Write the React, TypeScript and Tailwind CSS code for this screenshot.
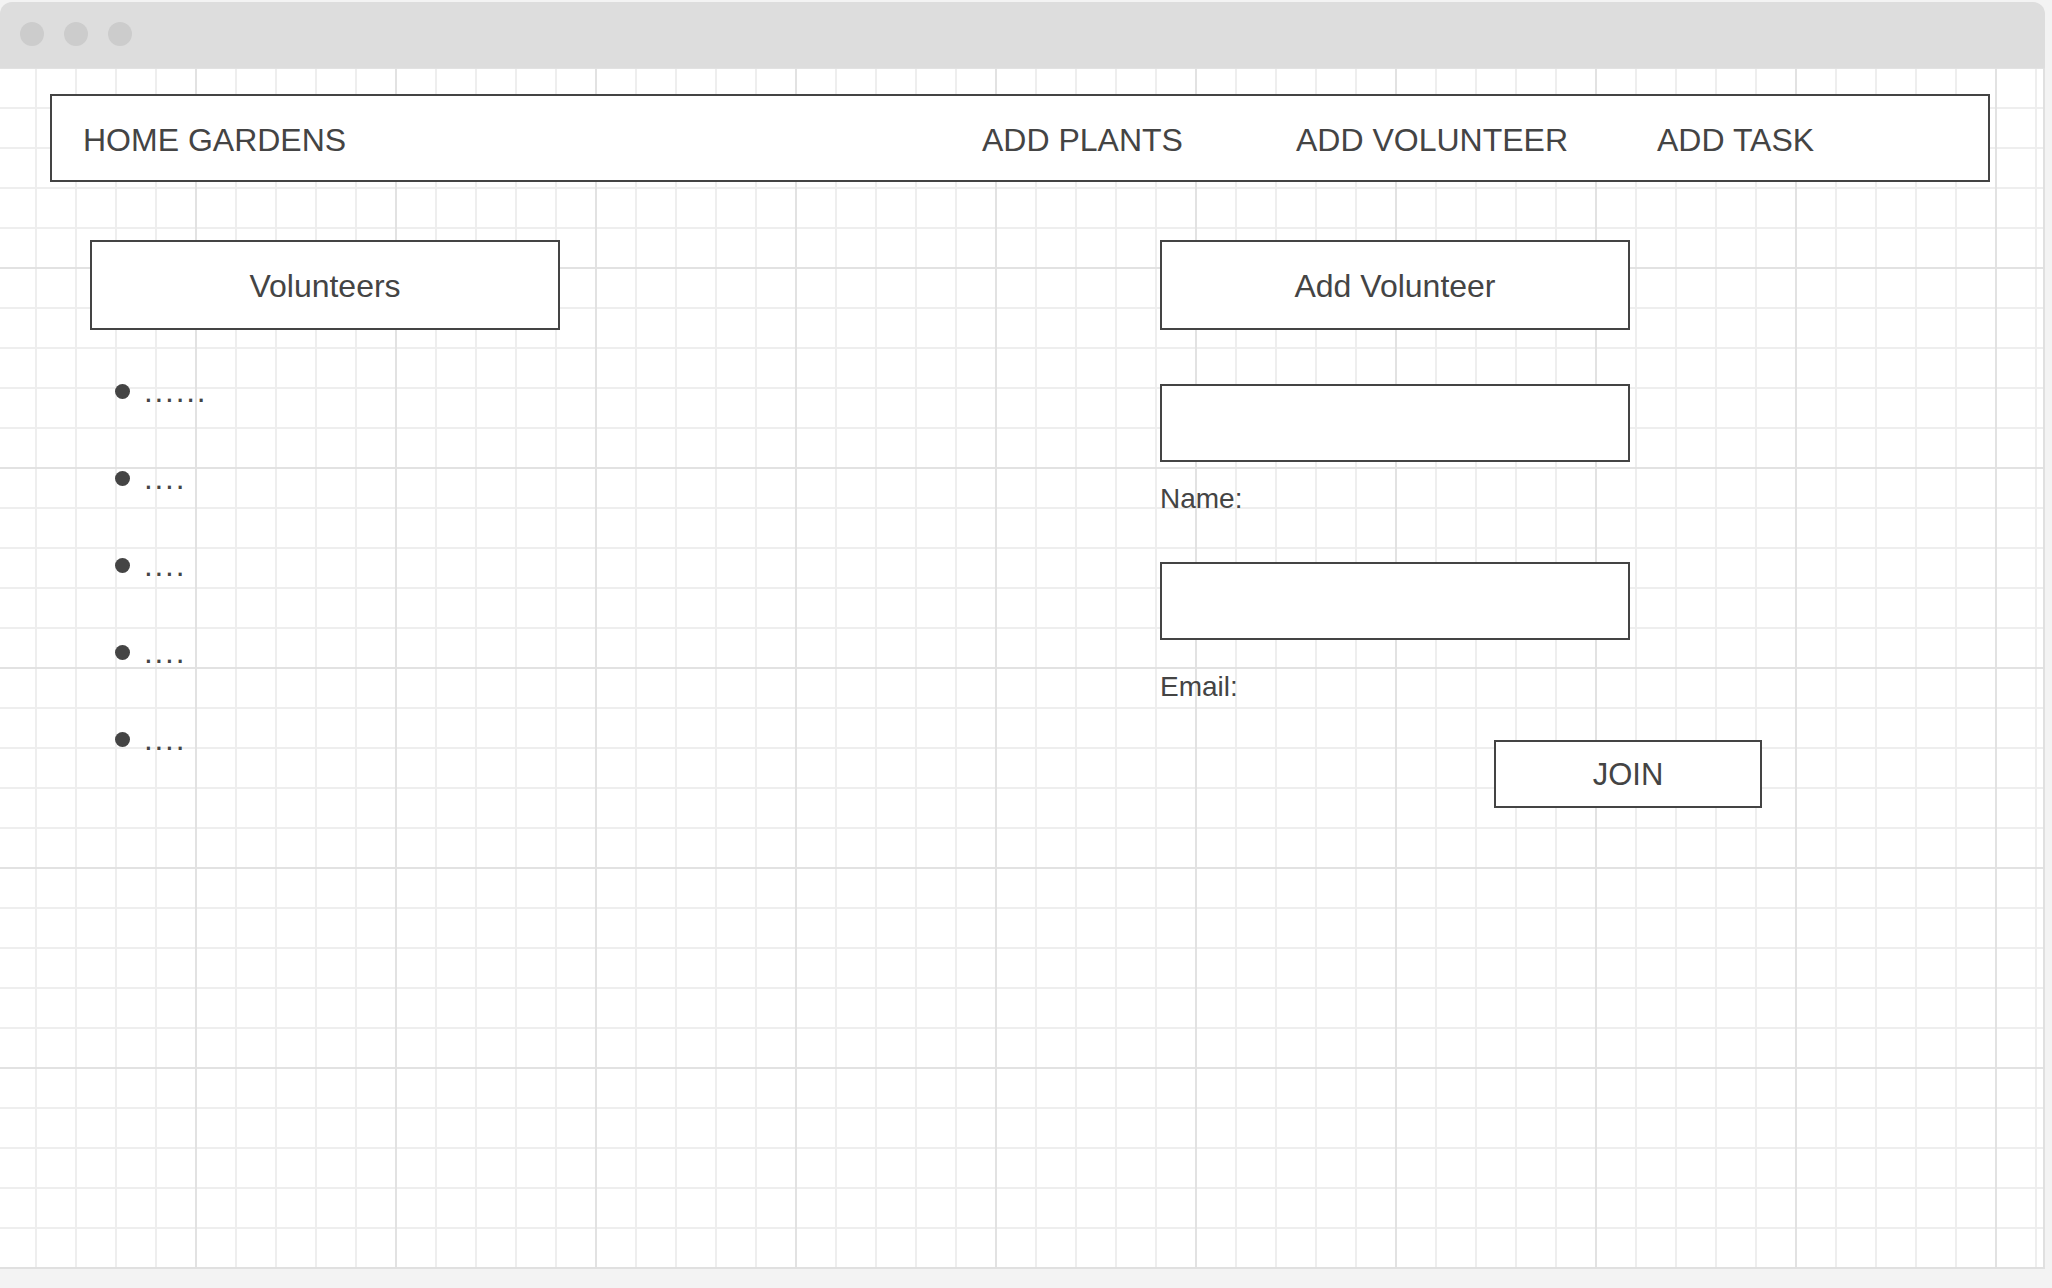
const navItems = [
  { label: "HOME GARDENS", width: "w-[899px]" },
  { label: "ADD PLANTS", width: "w-[314px]" },
  { label: "ADD VOLUNTEER", width: "w-[361px]" },
  { label: "ADD TASK", width: "" },
];

const volunteers = ["......", "....", "....", "....", "...."];

const Box = ({ children, className = "" }: { children?: React.ReactNode; className?: string }) => (
  <div className={`border-2 border-[#444444] bg-white flex items-center justify-center pt-[2px] ${className}`}>
    {children}
  </div>
);

const App = () => {
  return (
    <div className="min-h-screen bg-[#f3f3f3] pt-[2px] font-['Liberation_Sans',Arial,sans-serif] text-[#444444]">
      <div className="w-[2045px]">
        {/* window bar */}
        <div className="h-[66px] bg-[#dddddd] rounded-t-[12px] flex items-start pt-[20px] pl-[20px] gap-[20px]">
          <div className="w-[24px] h-[24px] rounded-full bg-[#cccccc]" />
          <div className="w-[24px] h-[24px] rounded-full bg-[#cccccc]" />
          <div className="w-[24px] h-[24px] rounded-full bg-[#cccccc]" />
        </div>

        {/* canvas */}
        <div className="h-[1201px] border-r-2 border-b-2 border-[#e0e0e0] bg-white bg-[linear-gradient(to_right,#e2e2e2_2px,transparent_2px),linear-gradient(to_bottom,#e2e2e2_2px,transparent_2px),linear-gradient(to_right,#eeeeee_2px,transparent_2px),linear-gradient(to_bottom,#eeeeee_2px,transparent_2px)] [background-size:200px_200px,200px_200px,40px_40px,40px_40px] [background-position:195px_-1px,195px_-1px,35px_-1px,35px_-1px] pt-[26px] pl-[50px]">
          <nav className="w-[1940px] h-[88px] border-2 border-[#444444] bg-white flex items-center pl-[31px] pt-[3px] text-[32px] leading-none">
            {navItems.map((item) => (
              <div key={item.label} className={`${item.width} shrink-0`}>
                {item.label}
              </div>
            ))}
          </nav>

          <div className="flex mt-[58px] pl-[40px]">
            {/* volunteers list */}
            <div className="w-[470px]">
              <Box className="h-[90px] text-[32px]">Volunteers</Box>
              <ul className="mt-[18px] pl-[25px]">
                {volunteers.map((v, i) => (
                  <li key={i} className="h-[87px] flex items-center gap-[14px]">
                    <span className="w-[15px] h-[15px] rounded-full bg-[#444444]" />
                    <span className="text-[31.5px] leading-none tracking-[1.8px]">{v}</span>
                  </li>
                ))}
              </ul>
            </div>

            {/* add volunteer form */}
            <div className="w-[470px] ml-[600px] flex flex-col">
              <Box className="h-[90px] text-[32px]">Add Volunteer</Box>
              <div className="mt-[54px] h-[78px] border-2 border-[#444444] bg-white" />
              <label className="mt-[23px] text-[28px] leading-none">Name:</label>
              <div className="mt-[49px] h-[78px] border-2 border-[#444444] bg-white" />
              <label className="mt-[33px] text-[28px] leading-none">Email:</label>
              <Box className="mt-[39px] ml-[334px] w-[268px] h-[68px] text-[31px]">JOIN</Box>
            </div>
          </div>
        </div>
      </div>
    </div>
  );
};

export default App;
